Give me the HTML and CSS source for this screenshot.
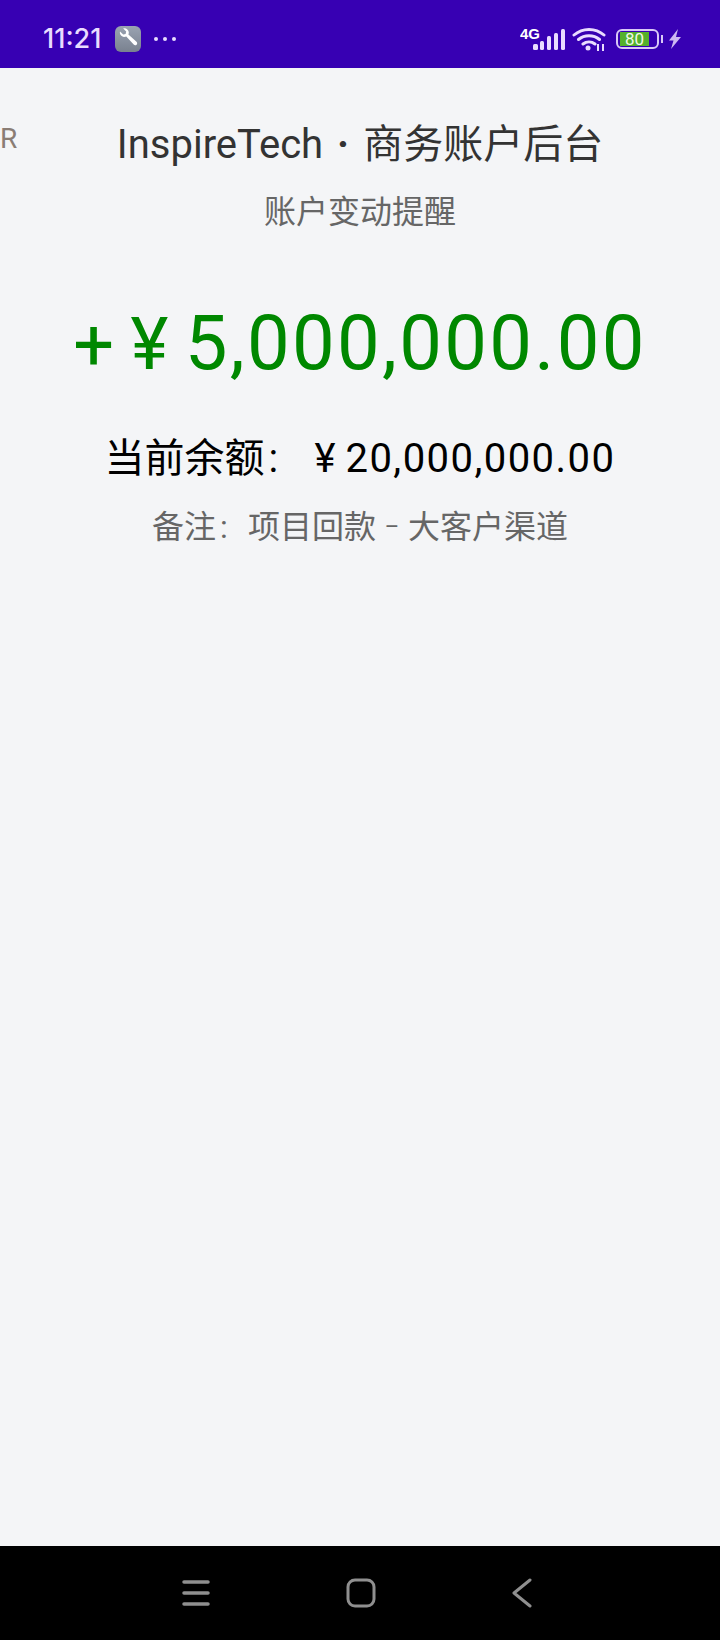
FILE: index.html
```html
<!DOCTYPE html>
<html lang="zh-CN">
<head>
  <meta charset="UTF-8" />
  <title>账户变动提醒</title>
  <link rel="stylesheet" href="styles.css">
</head>
<body>
  <div class="status-bar">
    <div class="status-left">
      <span class="clock">11:21</span>
      <span class="app-icon">
        <svg width="26" height="26" viewBox="0 0 26 26">
          <path d="M5 5.500l3.200 3 2.400-.6.600-2.400-3-3c2.600-.8 5.400 1.200 5.600 3.800 0 .8-.1 1.500-.4 2.100l8.100 7.400c.9.800.9 2.100.1 2.900-.8.800-2.100.800-2.900-.1l-7.400-8.100c-.7.300-1.400.400-2.200.400C6.300 10.700 4.300 8 5 5.500z" fill="#fff"/>
        </svg>
      </span>
      <span class="dots"><i></i><i></i><i></i></span>
    </div>
    <div class="status-right">
      <svg class="signal" width="46" height="28" viewBox="-2 -2 46 28">
        <text x="-2" y="12" class="net-label">4G</text>
        <rect x="11" y="17" width="5" height="6" rx="1.500" fill="#e9dcff"/>
        <rect x="18" y="14" width="4" height="9" rx="1.500" fill="#e9dcff"/>
        <rect x="25" y="9" width="4" height="14" rx="1.500" fill="#e9dcff"/>
        <rect x="32" y="6" width="4" height="17" rx="1.500" fill="#e9dcff"/>
        <rect x="39" y="2" width="4" height="21" rx="1.500" fill="#e9dcff"/>
      </svg>
      <svg class="wifi" width="34" height="26" viewBox="0 0 34 26">
        <path d="M2 9c8.500-7.500 21.500-7.500 30 0M6.500 13.500c6-5 15-5 21 0M11 18c3.500-2.700 8.500-2.700 12 0" fill="none" stroke="#e9dcff" stroke-width="3" stroke-linecap="round"/>
        <circle cx="16" cy="22" r="2.500" fill="#e9dcff"/>
        <path d="M26 18v7M31 18v7" stroke="#e9dcff" stroke-width="2"/>
      </svg>
      <div class="battery">
        <div class="battery-shell">
          <div class="battery-fill">80</div>
        </div>
        <span class="battery-tip"></span>
      </div>
      <svg class="bolt" width="14" height="20" viewBox="0 0 14 20">
        <path d="M10 0L1 11.500h4.500L3 20l10-12H8z" fill="#cdb8f2"/>
      </svg>
    </div>
  </div>

  <div class="main">
    <span class="edge-letter">R</span>
    <h1 class="title">InspireTech<span class="sep">·</span>商务账户后台</h1>
    <p class="subtitle">账户变动提醒</p>
    <p class="amount"><span class="sign">+ ¥ </span><span class="digits">5,000,000.00</span></p>
    <p class="balance">当前余额<span class="colon">:</span> ¥ <span class="digits">20,000,000.00</span></p>
    <p class="remark">备注<span class="colon">:</span>项目回款<span class="dash">–</span>大客户渠道</p>
  </div>

  <div class="nav-bar">
    <svg width="28" height="28" viewBox="0 0 28 28">
      <path d="M2 3h24M2 14h24M2 25h24" stroke="#8f8f8f" stroke-width="3.500" stroke-linecap="round"/>
    </svg>
    <svg width="30" height="30" viewBox="0 0 30 30">
      <rect x="2" y="2" width="26" height="26" rx="7" fill="none" stroke="#8f8f8f" stroke-width="3"/>
    </svg>
    <svg width="20" height="30" viewBox="0 0 20 30">
      <path d="M18 2L2 15l16 13" fill="none" stroke="#8f8f8f" stroke-width="3" stroke-linecap="round" stroke-linejoin="round"/>
    </svg>
  </div>
</body>
</html>
```

FILE: styles.css
```css
html, body {
  height: 100%;
}
body {
  margin: 0;
  display: flex;
  flex-direction: column;
  font-family: Roboto, "Noto Sans CJK SC", sans-serif;
  background-color: #f4f5f7;
}
p, h1 {
  margin: 0;
}

/* Status bar */
.status-bar {
  height: 68px;
  flex: none;
  box-sizing: border-box;
  display: flex;
  justify-content: space-between;
  align-items: center;
  padding: 9px 38px 0 43px;
  background-color: #3700b3;
  color: #e9dcff;
}
.status-left, .status-right {
  display: flex;
  align-items: center;
}
.clock {
  font-family: Inter, sans-serif;
  font-size: 27px;
  font-weight: 500;
  margin-right: 14px;
}
.app-icon {
  width: 26px;
  height: 26px;
  border-radius: 6px;
  background: linear-gradient(#9aa3b2, #79818f);
  margin-right: 13px;
}
.app-icon svg {
  display: block;
}
.dots {
  display: flex;
  gap: 5px;
}
.dots i {
  width: 4px;
  height: 4px;
  border-radius: 50%;
  background-color: #e9dcff;
}
.net-label {
  font-family: "Liberation Sans", sans-serif;
  font-size: 15px;
  font-weight: 700;
  fill: #fff;
}
.wifi {
  margin-left: 6px;
}
.battery {
  display: flex;
  align-items: center;
  margin-left: 10px;
}
.battery-shell {
  width: 43px;
  height: 20px;
  box-sizing: border-box;
  border: 2px solid #d9c8f7;
  border-radius: 6px;
  padding: 1px 2px;
}
.battery-fill {
  width: 29px;
  height: 14px;
  background-color: #55b02c;
  color: #eef8e4;
  font-family: Roboto, sans-serif;
  font-size: 17px;
  line-height: 14px;
  text-align: center;
}
.battery-tip {
  width: 2px;
  height: 8px;
  margin-left: 2px;
  background-color: #d9c8f7;
}
.bolt {
  margin-left: 5px;
}

/* Main content */
.main {
  flex: 1;
  position: relative;
  text-align: center;
  padding-top: 54px;
}
.edge-letter {
  position: absolute;
  left: 0;
  top: 55px;
  font-size: 28px;
  line-height: 32px;
  color: #8a7d75;
}
.title {
  font-size: 40px;
  font-weight: 400;
  line-height: 46px;
  color: #333;
}
.sep {
  display: inline-block;
  width: 40px;
  font-weight: 700;
}
.subtitle {
  font-size: 32px;
  line-height: 40px;
  margin-top: 24px;
  color: #666;
}
.amount {
  font-size: 76px;
  line-height: 90px;
  margin-top: 66px;
  color: #008800;
}
.sign {
  font-size: 72px;
  word-spacing: -1.500px;
}
.amount .digits {
  letter-spacing: 2.300px;
}
.balance {
  font-size: 40px;
  line-height: 50px;
  margin-top: 44px;
  color: #000;
}
.balance .digits {
  letter-spacing: 1.450px;
}
.colon {
  display: inline-block;
  width: 1em;
  box-sizing: border-box;
  padding-left: 4px;
  text-align: left;
}
.remark {
  font-size: 32px;
  line-height: 40px;
  margin-top: 23px;
  color: #666;
}
.dash {
  display: inline-block;
  width: 32px;
  font-size: 22px;
  vertical-align: 4px;
}

/* Bottom navigation */
.nav-bar {
  height: 94px;
  flex: none;
  box-sizing: border-box;
  display: flex;
  align-items: center;
  justify-content: center;
  gap: 136px;
  padding-right: 7px;
  background-color: #000;
}
```
